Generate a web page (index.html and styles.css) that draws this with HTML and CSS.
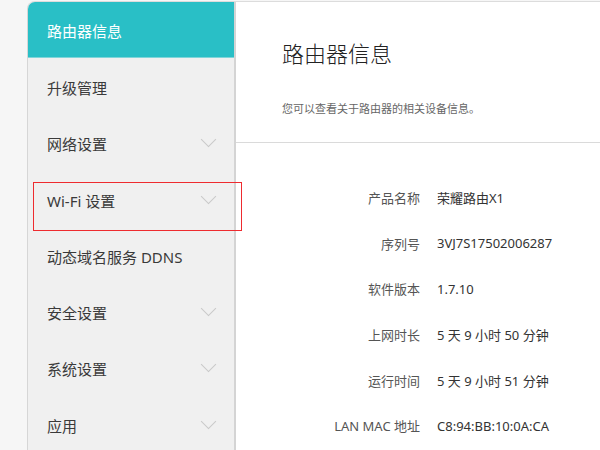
FILE: index.html
```html
<!DOCTYPE html>
<html lang="zh-CN">
<head>
    <meta charset="UTF-8">
    <title>路由器信息</title>
    <link rel="stylesheet" href="styles.css">
</head>
<body>
    <div class="frame">
        <div class="sidebar">
            <div class="nav-item active">路由器信息</div>
            <div class="nav-item">升级管理</div>
            <div class="nav-item">网络设置<span class="chev"></span></div>
            <div class="nav-item">Wi-Fi 设置<span class="chev"></span><div class="mark"></div></div>
            <div class="nav-item">动态域名服务 DDNS</div>
            <div class="nav-item">安全设置<span class="chev"></span></div>
            <div class="nav-item">系统设置<span class="chev"></span></div>
            <div class="nav-item">应用<span class="chev"></span></div>
        </div>

        <div class="main">
            <div class="head">
                <h1>路由器信息</h1>
                <p>您可以查看关于路由器的相关设备信息。</p>
            </div>
            <div class="info">
                <div class="label">产品名称</div><div class="value">荣耀路由X1</div>
                <div class="label">序列号</div><div class="value">3VJ7S17502006287</div>
                <div class="label">软件版本</div><div class="value">1.7.10</div>
                <div class="label">上网时长</div><div class="value">5 天 9 小时 50 分钟</div>
                <div class="label">运行时间</div><div class="value">5 天 9 小时 51 分钟</div>
                <div class="label">LAN MAC 地址</div><div class="value">C8:94:BB:10:0A:CA</div>
            </div>
        </div>
    </div>
</body>
</html>
```

FILE: styles.css
```css
html, body {
    height: 100%;
}
body {
    margin: 0;
    padding: 1px 0 0 27px;
    box-sizing: border-box;
    background: #f6f6f6;
    font-family: "Noto Sans", "Noto Sans CJK SC", sans-serif;
    overflow: hidden;
}
.frame {
    display: flex;
    height: 100%;
    overflow: hidden;
    border-top: 1px solid #dcdcdc;
    border-left: 1px solid #d6d6d6;
    border-top-left-radius: 8px;
}
.sidebar {
    width: 206px;
    flex-shrink: 0;
    background: #f0f0f0;
    border-right: 2px solid #d4d4d4;
}
.nav-item {
    position: relative;
    display: flex;
    align-items: center;
    height: 56.3px;
    padding: 2px 17px 0 19px;
    box-sizing: border-box;
    font-size: 15px;
    color: #3a3a3a;
}
.nav-item.active {
    background: #29bfc6;
    color: #fff;
    border-bottom: 1px solid #7fd5d9;
}
.chev {
    margin-left: auto;
    width: 10px;
    height: 10px;
    border-right: 1px solid #c9c9c9;
    border-bottom: 1px solid #c9c9c9;
    transform: translate(-3px, -4px) rotate(45deg);
}
.mark {
    position: absolute;
    left: 5px;
    top: 11px;
    width: 209px;
    height: 49px;
    box-sizing: border-box;
    border: 1px solid #ee2b2f;
}
.main {
    flex: 1;
    background: #fff;
}
.head {
    height: 141px;
    padding: 36px 0 0 46px;
    box-sizing: border-box;
    border-bottom: 1px solid #dadada;
}
.head h1 {
    margin: 0;
    font-size: 22px;
    font-weight: 300;
    line-height: 30px;
    color: #222;
}
.head p {
    margin: 33px 0 0;
    font-size: 11px;
    line-height: 16px;
    color: #666;
}
.info {
    display: grid;
    grid-template-columns: 184px 1fr;
    column-gap: 17px;
    grid-auto-rows: 45.6px;
    align-items: center;
    padding-top: 32px;
    font-size: 13px;
}
.label {
    text-align: right;
    color: #555;
}
.value {
    color: #333;
}
```
